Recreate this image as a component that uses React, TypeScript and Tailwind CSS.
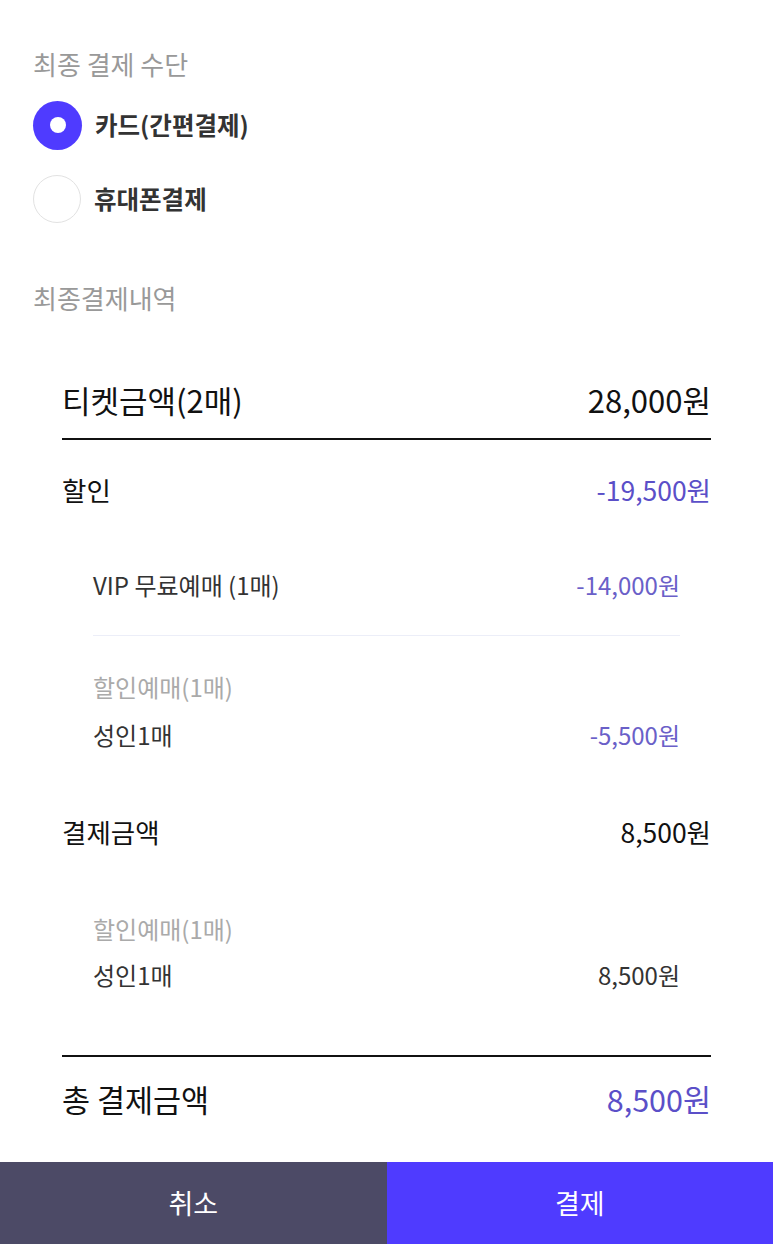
import { useState } from 'react'

const font = { fontFamily: '"Noto Sans CJK KR", "Noto Sans", sans-serif' }

function Radio({ checked, label, onClick }: { checked: boolean; label: string; onClick: () => void }) {
  return (
    <button type="button" onClick={onClick} className="flex items-center h-[48px] text-left">
      {checked ? (
        <span className="w-[49px] h-[49px] rounded-full bg-[#4f3bff] flex items-center justify-center">
          <span className="w-[16px] h-[16px] rounded-full bg-white" />
        </span>
      ) : (
        <span className="w-[48px] h-[48px] rounded-full border border-[#e2e2e2] bg-white" />
      )}
      <span className="ml-[13px] text-[24.5px] font-bold text-[#333]">{label}</span>
    </button>
  )
}

function Row({ label, value, className = '', valueClass = '' }: { label: string; value: string; className?: string; valueClass?: string }) {
  return (
    <div className={`flex items-center justify-between ${className}`}>
      <span>{label}</span>
      <span className={valueClass}>{value}</span>
    </div>
  )
}

export default function App() {
  const [method, setMethod] = useState<'card' | 'phone'>('card')

  return (
    <div className="w-[773px] h-[1244px] bg-white flex flex-col" style={font}>
      <div className="pl-[33px] pt-[43px]">
        <div className="h-[40px] flex items-center text-[26px] text-[#999]">최종 결제 수단</div>
        <div className="mt-[18px]">
          <Radio checked={method === 'card'} label="카드(간편결제)" onClick={() => setMethod('card')} />
        </div>
        <div className="mt-[26px]">
          <Radio checked={method === 'phone'} label="휴대폰결제" onClick={() => setMethod('phone')} />
        </div>
        <div className="mt-[54px] h-[40px] flex items-center text-[26px] text-[#999]">최종결제내역</div>
      </div>

      <div className="px-[62px] mt-[53px] text-[#111]">
        <Row label="티켓금액(2매)" value="28,000원" className="h-[60px] text-[31px]" />
        <div className="mt-[8px] h-[2px] bg-[#111]" />

        <Row label="할인" value="-19,500원" className="mt-[30px] h-[40px] text-[26.5px]" valueClass="text-[#5b4fc8]" />

        <div className="px-[31px] text-[24px] text-[#333]">
          <Row label="VIP 무료예매 (1매)" value="-14,000원" className="mt-[55px] h-[40px]" valueClass="text-[#6a60c8]" />
          <div className="mt-[30px] h-px bg-[#eceef8]" />
          <div className="mt-[36px] h-[30px] flex items-center text-[#aaa]">할인예매(1매)</div>
          <Row label="성인1매" value="-5,500원" className="mt-[13px] h-[40px]" valueClass="text-[#6a60c8]" />
        </div>

        <Row label="결제금액" value="8,500원" className="mt-[57px] h-[40px] text-[26.5px]" />

        <div className="px-[31px] text-[24px] text-[#333]">
          <div className="mt-[62px] h-[30px] flex items-center text-[#aaa]">할인예매(1매)</div>
          <Row label="성인1매" value="8,500원" className="mt-[11px] h-[40px]" />
        </div>

        <div className="mt-[60px] h-[2px] bg-[#111]" />
        <Row label="총 결제금액" value="8,500원" className="mt-[18px] h-[50px] text-[30.5px]" valueClass="text-[#5b4fc8]" />
      </div>

      <div className="mt-auto flex h-[82px] text-white text-[27px]">
        <button type="button" className="flex-1 bg-[#4c4a66] flex items-center justify-center">취소</button>
        <button type="button" className="flex-1 bg-[#4f3bff] flex items-center justify-center">결제</button>
      </div>
    </div>
  )
}
